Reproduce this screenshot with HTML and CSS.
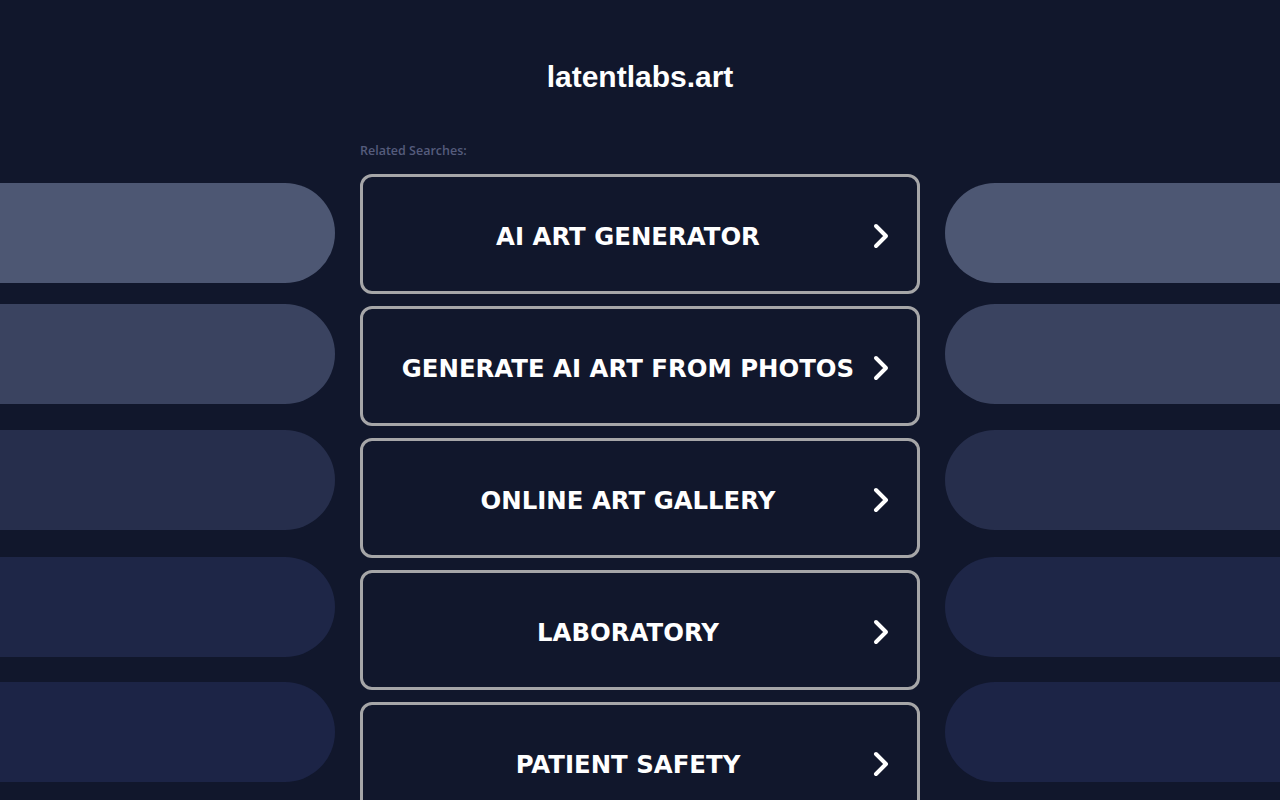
FILE: index.html
```html
<!DOCTYPE html>
<html>
<head>
<meta charset="utf-8">
<title>latentlabs.art</title>
<link rel="stylesheet" href="styles.css">
</head>
<body>
<div class="page">
  <aside class="side side-left">
    <div class="pill p1"></div>
    <div class="pill p2"></div>
    <div class="pill p3"></div>
    <div class="pill p4"></div>
    <div class="pill p5"></div>
  </aside>
  <main class="center">
    <h1 class="domain">latentlabs.art</h1>
    <div class="related">Related Searches:</div>
    <div class="links">
      <a class="link" href="#"><span class="label">AI ART GENERATOR</span><svg class="chev" viewBox="0 0 20 26" width="20" height="26"><path d="M5 3 L15 13 L5 23" fill="none" stroke="#fff" stroke-width="4" stroke-linecap="round" stroke-linejoin="round"/></svg></a>
      <a class="link" href="#"><span class="label">GENERATE AI ART FROM PHOTOS</span><svg class="chev" viewBox="0 0 20 26" width="20" height="26"><path d="M5 3 L15 13 L5 23" fill="none" stroke="#fff" stroke-width="4" stroke-linecap="round" stroke-linejoin="round"/></svg></a>
      <a class="link" href="#"><span class="label">ONLINE ART GALLERY</span><svg class="chev" viewBox="0 0 20 26" width="20" height="26"><path d="M5 3 L15 13 L5 23" fill="none" stroke="#fff" stroke-width="4" stroke-linecap="round" stroke-linejoin="round"/></svg></a>
      <a class="link" href="#"><span class="label">LABORATORY</span><svg class="chev" viewBox="0 0 20 26" width="20" height="26"><path d="M5 3 L15 13 L5 23" fill="none" stroke="#fff" stroke-width="4" stroke-linecap="round" stroke-linejoin="round"/></svg></a>
      <a class="link" href="#"><span class="label">PATIENT SAFETY</span><svg class="chev" viewBox="0 0 20 26" width="20" height="26"><path d="M5 3 L15 13 L5 23" fill="none" stroke="#fff" stroke-width="4" stroke-linecap="round" stroke-linejoin="round"/></svg></a>
    </div>
  </main>
  <aside class="side side-right">
    <div class="pill p1"></div>
    <div class="pill p2"></div>
    <div class="pill p3"></div>
    <div class="pill p4"></div>
    <div class="pill p5"></div>
  </aside>
</div>
</body>
</html>
```

FILE: styles.css
```css
html, body {
  margin: 0;
  padding: 0;
  background: #11172c;
  height: 100%;
  overflow: hidden;
}

.page {
  display: grid;
  grid-template-columns: 335px 560px 335px;
  column-gap: 25px;
  width: 1280px;
  height: 800px;
}

.side {
  display: flex;
  flex-direction: column;
  padding-top: 183px;
}

.pill {
  height: 100px;
  flex: none;
}

.side-left .pill {
  border-radius: 0 50px 50px 0;
}

.side-right .pill {
  border-radius: 50px 0 0 50px;
}

.p1 { background: #4d5773; }
.p2 { background: #3a4360; margin-top: 21px; }
.p3 { background: #262e4c; margin-top: 26px; }
.p4 { background: #1e2647; margin-top: 27px; }
.p5 { background: #1c2446; margin-top: 25px; }

.center {
  display: flex;
  flex-direction: column;
}

.domain {
  margin: 58px 0 0;
  text-align: center;
  font-family: "Liberation Sans", Arial, sans-serif;
  font-weight: bold;
  font-size: 30px;
  line-height: 38px;
  color: #ffffff;
}

.related {
  margin-top: 47px;
  font-family: "Open Sans", "Liberation Sans", sans-serif;
  font-size: 12.5px;
  font-weight: 600;
  line-height: 16px;
  color: #555c7c;
}

.links {
  margin-top: 15px;
  display: flex;
  flex-direction: column;
  gap: 12px;
}

.link {
  box-sizing: border-box;
  height: 120px;
  border: 3px solid #a6a6a8;
  border-radius: 12px;
  display: flex;
  align-items: center;
  padding: 0 26px 0 22px;
  text-decoration: none;
  color: #ffffff;
}

.label {
  flex: 1;
  text-align: center;
  font-family: "DejaVu Sans", Verdana, sans-serif;
  font-weight: bold;
  font-size: 24.4px;
  padding-top: 4px;
  letter-spacing: 0;
  color: #ffffff;
}

.chev {
  flex: none;
  display: block;
  margin-top: 3px;
}
```
